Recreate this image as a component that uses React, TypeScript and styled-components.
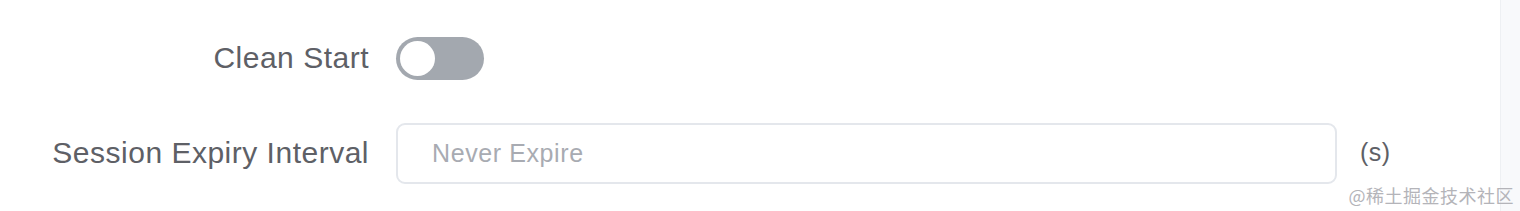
import React, { useState } from 'react';
import styled, { createGlobalStyle } from 'styled-components';

const GlobalStyle = createGlobalStyle`
  html, body {
    margin: 0;
    padding: 0;
    background: #ffffff;
    font-family: "Liberation Sans", Arial, sans-serif;
  }
`;

const Page = styled.div`
  display: flex;
  width: 1520px;
  height: 211px;
  overflow: hidden;
`;

const Main = styled.div`
  position: relative;
  flex: 1;
  padding-top: 37px;
`;

const SideStrip = styled.div`
  width: 19px;
  border-left: 1px solid #eef0f3;
  background: #f8f9fb;
`;

const Form = styled.div`
  display: grid;
  grid-template-columns: 368px 941px auto;
  column-gap: 28px;
  row-gap: 43px;
  align-items: center;
`;

const Label = styled.label`
  text-align: right;
  font-size: 30px;
  letter-spacing: 0.5px;
  margin-right: -1px;
  padding-bottom: 2px;
  color: #5e6066;
  white-space: nowrap;
`;

const SwitchCell = styled.div`
  display: flex;
  align-items: center;
`;

const Switch = styled.button<{ on: boolean }>`
  position: relative;
  display: block;
  width: 88px;
  height: 43px;
  border: none;
  padding: 0;
  border-radius: 22px;
  background: ${p => (p.on ? '#34c388' : '#a3a8af')};
  cursor: pointer;
`;

const Knob = styled.span<{ on: boolean }>`
  position: absolute;
  top: 4px;
  left: ${p => (p.on ? '48px' : '4px')};
  width: 35px;
  height: 35px;
  border-radius: 50%;
  background: #ffffff;
  transition: left 0.2s;
`;

const Input = styled.input`
  box-sizing: border-box;
  display: block;
  width: 941px;
  height: 61px;
  padding: 0 34px;
  border: 2px solid #e4e7ec;
  border-radius: 9px;
  font-family: "Liberation Sans", Arial, sans-serif;
  font-size: 25px;
  letter-spacing: 0.6px;
  color: #606266;
  outline: none;
  &::placeholder {
    color: #a8abb2;
  }
`;

const Unit = styled.span`
  margin-left: -5px;
  padding-bottom: 2px;
  font-size: 25px;
  letter-spacing: 0.5px;
  color: #5e6066;
`;

const Watermark = styled.div`
  position: absolute;
  right: -14px;
  bottom: 3px;
  font-family: "Noto Sans CJK SC", sans-serif;
  font-size: 18px;
  color: #b4b4b9;
  letter-spacing: 0.5px;
`;

const Spacer = styled.span``;

export default function App() {
  const [clean, setClean] = useState(false);
  return (
    <>
      <GlobalStyle />
      <Page>
        <Main>
          <Form>
            <Label>Clean Start</Label>
            <SwitchCell>
              <Switch on={clean} onClick={() => setClean(!clean)}>
                <Knob on={clean} />
              </Switch>
            </SwitchCell>
            <Spacer />
            <Label>Session Expiry Interval</Label>
            <Input placeholder="Never Expire" />
            <Unit>(s)</Unit>
          </Form>
          <Watermark>@稀土掘金技术社区</Watermark>
        </Main>
        <SideStrip />
      </Page>
    </>
  );
}
